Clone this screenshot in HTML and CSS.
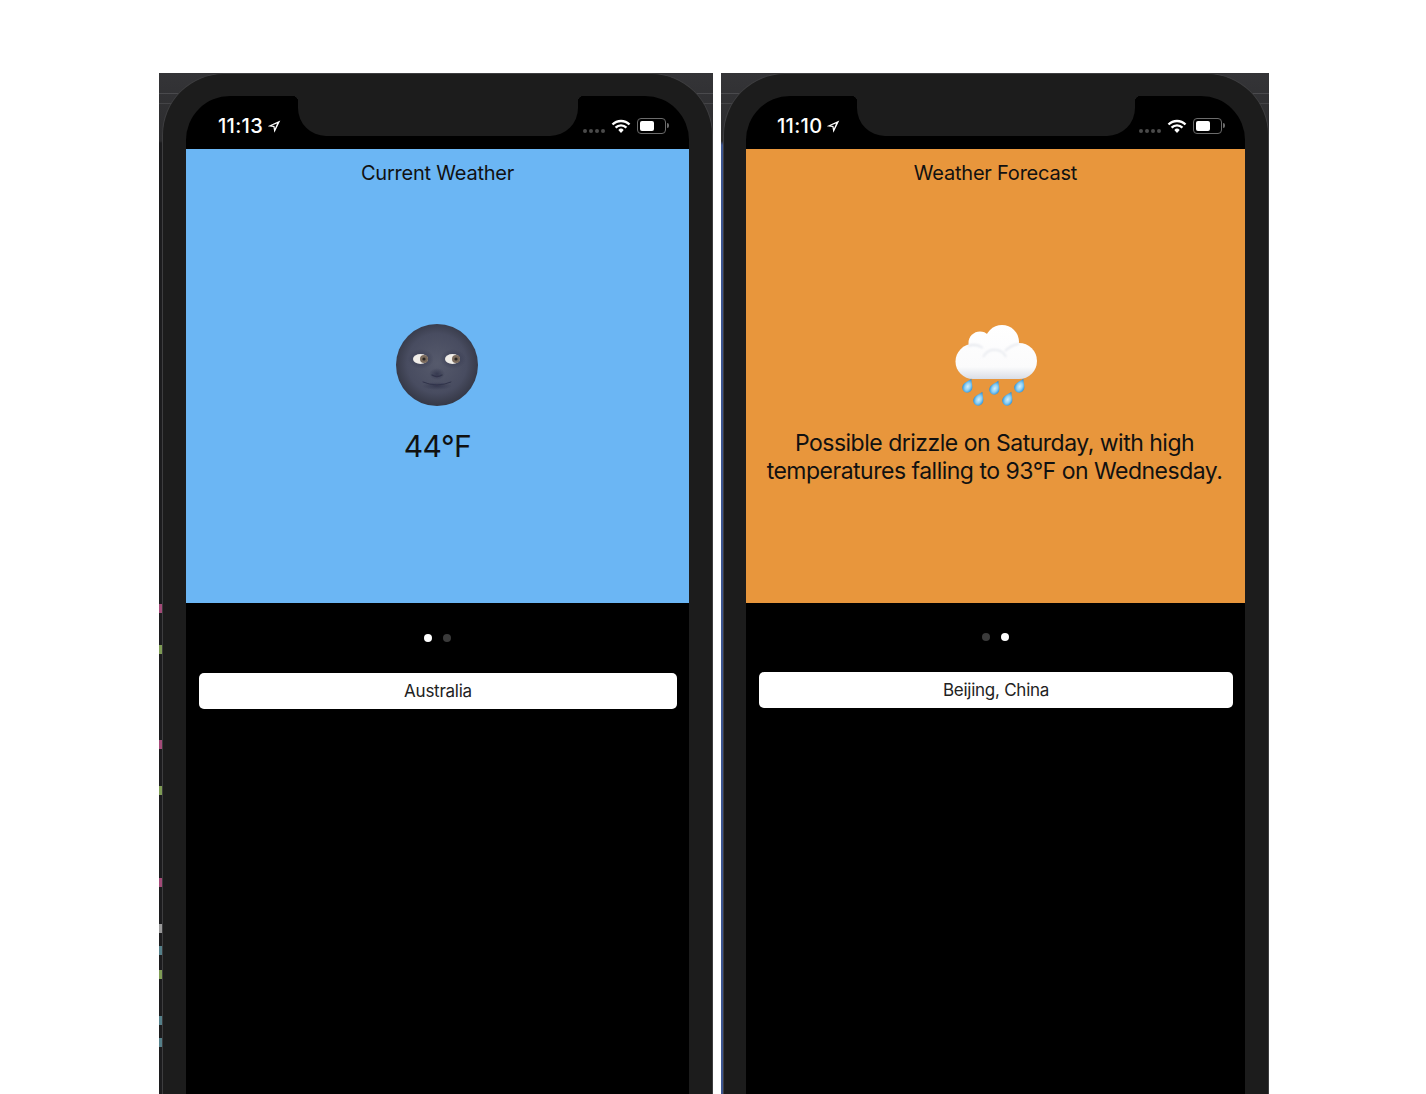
FILE: index.html
```html
<!DOCTYPE html>
<html lang="en">
<head>
    <meta charset="UTF-8">
    <meta name="viewport" content="width=device-width, initial-scale=1.0">
    <title>Weather App</title>
    <link rel="stylesheet" href="styles.css">
</head>
<body>
    <div class="page">
        <!-- Current weather -->
        <div class="shot shot-left">
            <span class="code-mark mark-pink" style="top: 531px"></span>
            <span class="code-mark mark-green" style="top: 572px"></span>
            <span class="code-mark mark-pink" style="top: 667px"></span>
            <span class="code-mark mark-green" style="top: 713px"></span>
            <span class="code-mark mark-pink" style="top: 805px"></span>
            <span class="code-mark mark-grey" style="top: 851px"></span>
            <span class="code-mark mark-teal" style="top: 873px"></span>
            <span class="code-mark mark-green" style="top: 897px"></span>
            <span class="code-mark mark-teal" style="top: 943px"></span>
            <span class="code-mark mark-teal" style="top: 965px"></span>
            <div class="phone">
                <div class="screen">
                    <div class="notch"></div>
                    <div class="status-bar">
                        <div class="status-time">
                            <span>11:13</span>
                            <svg class="location-icon" viewBox="0 0 13 13"><path d="M12.8 .4 .2 6.2 5.9 7 6.9 12.8Z M9.600 3.400 7.400 8.600 7 5.900 4.300 5.600Z" fill="#fff" fill-rule="evenodd"/></svg>
                        </div>
                        <div class="status-icons">
                            <div class="signal"><i></i><i></i><i></i><i></i></div>
                            <svg class="wifi-icon" viewBox="0 0 20 15"><path d="M1.5 5.5a12 12 0 0 1 17 0M4.6 8.6a7.6 7.6 0 0 1 10.8 0" fill="none" stroke="#fff" stroke-width="2.4"/><path d="M7.3 10.9a3.8 3.8 0 0 1 5.4 0L10 14Z" fill="#fff"/></svg>
                            <div class="battery"><div class="battery-level"></div></div>
                        </div>
                    </div>
                    <div class="panel panel-blue">
                        <div class="panel-title">Current Weather</div>
                        <div class="panel-body">
                            <svg class="emoji emoji-moon" viewBox="0 0 82 82">
                                <defs>
                                    <radialGradient id="moonFace" cx="50%" cy="48%" r="52%">
                                        <stop offset="0" stop-color="#565a6c"/>
                                        <stop offset=".7" stop-color="#484c60"/>
                                        <stop offset="1" stop-color="#353846"/>
                                    </radialGradient>
                                    <radialGradient id="moonShade" cx="50%" cy="50%" r="50%">
                                        <stop offset="0" stop-color="#30334a" stop-opacity=".8"/>
                                        <stop offset="1" stop-color="#30334a" stop-opacity="0"/>
                                    </radialGradient>
                                    <filter id="soft"><feGaussianBlur stdDeviation=".6"/></filter>
                                </defs>
                                <circle cx="41" cy="41" r="41" fill="url(#moonFace)"/>
                                <ellipse cx="25" cy="35" rx="13" ry="10" fill="url(#moonShade)"/>
                                <ellipse cx="57" cy="35" rx="13" ry="10" fill="url(#moonShade)"/>
                                <ellipse cx="41" cy="50" rx="8" ry="6" fill="url(#moonShade)"/>
                                <ellipse cx="41" cy="62" rx="15" ry="4" fill="url(#moonShade)"/>
                                <g filter="url(#soft)">
                                    <path d="M36 51q5 3 10 0" fill="none" stroke="#30334a" stroke-width="1.400" stroke-linecap="round"/>
                                    <path d="M27 58q14 6 28 0" fill="none" stroke="#30334a" stroke-width="1" stroke-linecap="round"/>
                                    <ellipse cx="24.500" cy="35" rx="7.500" ry="5" fill="#f1eee9"/>
                                    <ellipse cx="56.500" cy="35" rx="7.500" ry="5" fill="#f1eee9"/>
                                    <circle cx="28" cy="35" r="4" fill="#7a6a5c"/>
                                    <circle cx="60" cy="35" r="4" fill="#7a6a5c"/>
                                    <circle cx="28" cy="35" r="1.600" fill="#2a2524"/>
                                    <circle cx="60" cy="35" r="1.600" fill="#2a2524"/>
                                </g>
                            </svg>
                            <div class="temperature">44°F</div>
                        </div>
                    </div>
                    <div class="page-dots">
                        <span class="dot dot-active"></span>
                        <span class="dot"></span>
                    </div>
                    <div class="location-button">Australia</div>
                </div>
            </div>
        </div>

        <!-- Forecast -->
        <div class="shot shot-right">
            <div class="phone">
                <div class="screen">
                    <div class="notch"></div>
                    <div class="status-bar">
                        <div class="status-time">
                            <span>11:10</span>
                            <svg class="location-icon" viewBox="0 0 13 13"><path d="M12.8 .4 .2 6.2 5.9 7 6.9 12.8Z M9.600 3.400 7.400 8.600 7 5.900 4.300 5.600Z" fill="#fff" fill-rule="evenodd"/></svg>
                        </div>
                        <div class="status-icons">
                            <div class="signal"><i></i><i></i><i></i><i></i></div>
                            <svg class="wifi-icon" viewBox="0 0 20 15"><path d="M1.5 5.5a12 12 0 0 1 17 0M4.6 8.6a7.6 7.6 0 0 1 10.8 0" fill="none" stroke="#fff" stroke-width="2.4"/><path d="M7.3 10.9a3.8 3.8 0 0 1 5.4 0L10 14Z" fill="#fff"/></svg>
                            <div class="battery"><div class="battery-level"></div></div>
                        </div>
                    </div>
                    <div class="panel panel-orange">
                        <div class="panel-title">Weather Forecast</div>
                        <div class="panel-body">
                            <svg class="emoji" viewBox="0 0 82 82">
                                <defs>
                                    <linearGradient id="cloudFill" gradientUnits="userSpaceOnUse" x1="0" y1="0" x2="0" y2="55">
                                        <stop offset="0" stop-color="#ffffff"/>
                                        <stop offset=".78" stop-color="#fbfbfc"/>
                                        <stop offset="1" stop-color="#dadee6"/>
                                    </linearGradient>
                                    <radialGradient id="dropFill" cx="50%" cy="58%" r="52%">
                                        <stop offset="0" stop-color="#d4eefb"/>
                                        <stop offset=".5" stop-color="#8fd0f3"/>
                                        <stop offset="1" stop-color="#2590dc"/>
                                    </radialGradient>
                                    <filter id="cloudSoft"><feGaussianBlur stdDeviation="1"/></filter>
                                    <path id="drop" d="M0 -8C2 -4 5 -1.800 5 1.800A5 5 0 0 1 -5 1.800C-5 -1.800 -2 -4 0 -8Z" fill="url(#dropFill)"/>
                                </defs>
                                <g fill="url(#cloudFill)">
                                    <circle cx="47" cy="18" r="17"/>
                                    <circle cx="25" cy="19" r="11.500"/>
                                    <circle cx="42" cy="36" r="17"/>
                                    <circle cx="18" cy="37.500" r="17.500"/>
                                    <circle cx="64" cy="37" r="18"/>
                                    <rect x="18" y="25" width="46" height="30"/>
                                </g>
                                <g fill="none" stroke="#e3e6ec" stroke-width="1.500" filter="url(#cloudSoft)">
                                    <path d="M28 33q5 -9 14 -7 6 1 9 7"/>
                                    <path d="M13 22q8 -3 15 2"/>
                                    <path d="M50 27q6 -6 14 -7"/>
                                </g>
                                <use href="#drop" transform="translate(13 62) rotate(25)"/>
                                <use href="#drop" transform="translate(40 64) rotate(25)"/>
                                <use href="#drop" transform="translate(65 62) rotate(25)"/>
                                <use href="#drop" transform="translate(24 75) rotate(25)"/>
                                <use href="#drop" transform="translate(53 75) rotate(25)"/>
                            </svg>
                            <div class="forecast">Possible drizzle on Saturday, with high temperatures falling to 93°F on Wednesday.</div>
                        </div>
                    </div>
                    <div class="page-dots">
                        <span class="dot"></span>
                        <span class="dot dot-active"></span>
                    </div>
                    <div class="location-button">Beijing, China</div>
                </div>
            </div>
        </div>
    </div>
</body>
</html>
```

FILE: styles.css
```css
body {
    font-family: Inter, "Liberation Sans", sans-serif;
    margin: 0;
    padding: 0;
    background-color: #fff;
}
.page {
    display: flex;
    gap: 8px;
    height: 1094px;
    padding: 73px 0 0 159px;
    box-sizing: border-box;
    overflow: hidden;
}
/* Dark editor window behind each phone */
.shot {
    position: relative;
    height: 1021px;
    box-sizing: border-box;
    overflow: hidden;
    background:
        linear-gradient(#4a4a4d, #4a4a4d) 0 20px / 100% 1px no-repeat,
        linear-gradient(#444447, #444447) 0 30px / 100% 1px no-repeat,
        linear-gradient(#343437 0, #2c2c2e 68px, #1c1c1e 70px);
}
.shot-left {
    width: 554px;
    padding-left: 3px;
}
.shot-right {
    width: 548px;
    padding-left: 2px;
    background:
        linear-gradient(#4a4a4d, #4a4a4d) 0 20px / 100% 1px no-repeat,
        linear-gradient(#444447, #444447) 0 30px / 100% 1px no-repeat,
        linear-gradient(#343437 0, #2c2c2e 68px, #3c5590 72px);
}
.code-mark {
    position: absolute;
    left: 0;
    width: 3px;
    height: 9px;
}
.mark-pink { background-color: #a34a78; }
.mark-green { background-color: #7f9c55; }
.mark-grey { background-color: #9a9a9a; }
.mark-teal { background-color: #55808a; }

.phone {
    height: 100%;
    box-sizing: border-box;
    padding: 22px 23px 0;
    border: 1px solid #3d3d3f;
    border-bottom: none;
    border-radius: 62px 62px 0 0;
    background-color: #1c1c1c;
}
.shot-right .phone {
    padding-left: 22px;
}
.screen {
    position: relative;
    height: 100%;
    display: flex;
    flex-direction: column;
    background-color: #000;
    border-radius: 44px 44px 0 0;
    overflow: hidden;
}
.notch {
    position: absolute;
    top: 0;
    left: 112px;
    width: 280px;
    height: 40px;
    background-color: #1c1c1c;
    border-radius: 0 0 28px 28px;
}
.shot-right .notch {
    left: 111px;
    width: 278px;
}
.notch::before,
.notch::after {
    content: "";
    position: absolute;
    top: 0;
    width: 6px;
    height: 6px;
}
.notch::before {
    left: -6px;
    background: radial-gradient(circle at 0 100%, transparent 6px, #1c1c1c 6.5px);
}
.notch::after {
    right: -6px;
    background: radial-gradient(circle at 100% 100%, transparent 6px, #1c1c1c 6.5px);
}

/* Status bar */
.status-bar {
    height: 53px;
    flex-shrink: 0;
    display: flex;
    justify-content: space-between;
    align-items: flex-end;
    padding: 0 21px 11px 32px;
    box-sizing: border-box;
    color: #fff;
}
.shot-right .status-bar {
    padding-left: 31px;
}
.status-time {
    display: flex;
    align-items: center;
    gap: 4px;
    font-size: 20px;
    font-weight: 500;
    line-height: 24px;
    letter-spacing: 0.3px;
}
.location-icon {
    width: 14px;
    height: 13px;
}
.status-icons {
    display: flex;
    align-items: center;
    gap: 6px;
    margin-bottom: 4px;
}
.signal {
    display: flex;
    gap: 2px;
    margin-top: 9px;
}
.signal i {
    width: 4px;
    height: 4px;
    border-radius: 50%;
    background-color: #4a4a4a;
}
.wifi-icon {
    width: 20px;
    height: 15px;
}
.battery {
    position: relative;
    width: 29px;
    height: 16px;
    box-sizing: border-box;
    padding: 2px;
    border: 1.5px solid #6b6b6b;
    border-radius: 4px;
    margin-right: 2px;
}
.battery::after {
    content: "";
    position: absolute;
    right: -4px;
    top: 4px;
    width: 2px;
    height: 5px;
    background-color: #6b6b6b;
    border-radius: 0 2px 2px 0;
}
.battery-level {
    width: 14px;
    height: 100%;
    background-color: #fff;
    border-radius: 2px;
}

/* Coloured weather panel */
.panel {
    height: 454px;
    flex-shrink: 0;
    display: flex;
    flex-direction: column;
    color: #111;
}
.panel-blue { background-color: #6bb6f4; }
.panel-orange { background-color: #e8963c; }
.panel-title {
    margin-top: 12px;
    font-size: 20px;
    line-height: 24px;
    letter-spacing: -0.22px;
    text-align: center;
}
.panel-body {
    flex: 1;
    display: flex;
    flex-direction: column;
    align-items: center;
    padding-top: 139px;
}
.emoji {
    width: 82px;
    height: 82px;
    flex-shrink: 0;
}
.emoji-moon {
    margin-left: -1px;
}
.temperature {
    margin-top: 21px;
    font-size: 30px;
    line-height: 38px;
    letter-spacing: -0.5px;
}
.forecast {
    margin-top: 23px;
    padding-right: 2px;
    font-size: 23px;
    line-height: 28px;
    letter-spacing: -0.5px;
    text-align: center;
}

/* Pager and location button */
.page-dots {
    display: flex;
    justify-content: center;
    gap: 11px;
    margin-top: 31px;
}
.dot {
    width: 8px;
    height: 8px;
    border-radius: 50%;
    background-color: #3a3a3a;
}
.dot-active {
    background-color: #fff;
}
.location-button {
    margin: 31px 12px 0 13px;
    height: 36px;
    line-height: 36px;
    text-align: center;
    font-size: 17px;
    letter-spacing: -0.25px;
    color: #222;
    background-color: #fff;
    border-radius: 5px;
}
.shot-right .page-dots {
    margin-top: 30px;
}
```
